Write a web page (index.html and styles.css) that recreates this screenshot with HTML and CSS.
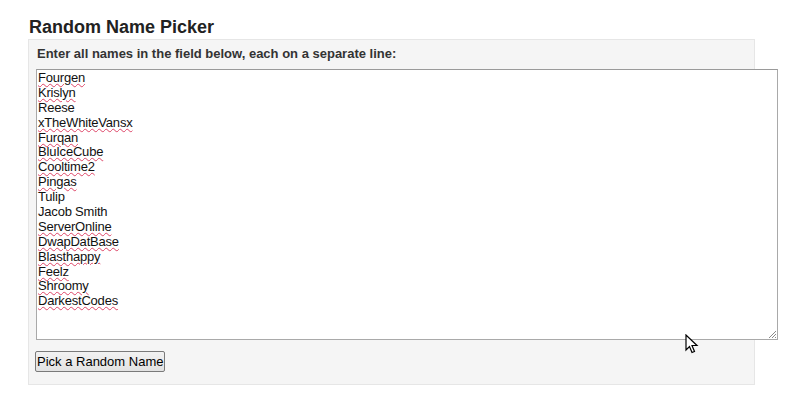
FILE: index.html
```html
<!DOCTYPE html>
<html>
<head>
<meta charset="utf-8">
<link rel="stylesheet" href="styles.css">
</head>
<body>
<div class="page">
  <h1 class="title">Random Name Picker</h1>
  <div class="panel">
    <label class="label">Enter all names in the field below, each on a separate line:</label>
    <div class="field-wrap">
      <div class="names" role="textbox" aria-multiline="true">
        <div class="line sp">Fourgen</div>
        <div class="line sp">Krislyn</div>
        <div class="line">Reese</div>
        <div class="line sp">xTheWhiteVansx</div>
        <div class="line sp">Furqan</div>
        <div class="line sp">BluIceCube</div>
        <div class="line sp">Cooltime2</div>
        <div class="line sp">Pingas</div>
        <div class="line">Tulip</div>
        <div class="line">Jacob Smith</div>
        <div class="line sp">ServerOnline</div>
        <div class="line sp">DwapDatBase</div>
        <div class="line sp">Blasthappy</div>
        <div class="line sp">Feelz</div>
        <div class="line sp">Shroomy</div>
        <div class="line sp">DarkestCodes</div>
      </div>
      <svg class="grip" width="9" height="9" viewBox="0 0 9 9">
        <path d="M8 1 L1 8 M8 4 L4 8 M8 7 L7 8" stroke="#8a8a8a" stroke-width="1" fill="none"/>
      </svg>
      <svg class="cursor" width="14" height="22" viewBox="0 0 14 22">
        <path d="M1 1 L1 16 L4.5 12.5 L7 18.5 L9.5 17.5 L7 11.5 L12 11.5 Z" fill="#fff" stroke="#000" stroke-width="1.2" stroke-linejoin="miter"/>
      </svg>
    </div>
    <button class="pick" type="button">Pick a Random Name</button>
  </div>
</div>
</body>
</html>
```

FILE: styles.css
```css
html, body {
  margin: 0;
  padding: 0;
  background: #ffffff;
}

body {
  font-family: "Liberation Sans", Arial, sans-serif;
  color: #222;
}

.page {
  padding: 17px 0 0 28px;
  width: 727px;
}

.title {
  margin: 0 0 1px 1px;
  font-size: 18px;
  line-height: 21px;
  font-weight: bold;
  color: #222;
}

.panel {
  background: #f5f5f5;
  border: 1px solid #e6e6e6;
  padding: 6px 0 12px 7px;
  display: flex;
  flex-direction: column;
  align-items: flex-start;
  height: 326px;
  box-sizing: content-box;
}

.label {
  display: block;
  margin: 0 0 7px 1px;
  font-size: 13px;
  line-height: 16px;
  font-weight: bold;
  color: #333;
}

.field-wrap {
  position: relative;
  width: 742px;
  height: 271px;
  flex: none;
}

.names {
  box-sizing: border-box;
  width: 742px;
  height: 271px;
  background: #fff;
  border: 1px solid #a9a9a9;
  border-top-color: #9a9a9a;
  padding: 1px 0 0 1px;
  font-size: 13px;
  line-height: 14.9px;
  letter-spacing: -0.2px;
  color: #111;
  overflow: hidden;
}

.line {
  white-space: pre;
  height: 14.9px;
}

.line.sp {
  display: block;
  width: max-content;
  text-decoration: underline wavy #dd4466;
  text-decoration-thickness: 1px;
  text-underline-offset: 1px;
}

.grip {
  position: absolute;
  right: 1px;
  bottom: 1px;
}

.cursor {
  position: absolute;
  left: 649px;
  top: 265px;
}

.pick {
  margin-top: 11px;
  margin-left: -1px;
  height: 21px;
  padding: 0 1px;
  font-family: "Liberation Sans", Arial, sans-serif;
  font-size: 13px;
  color: #000;
  background: linear-gradient(#f2f2f2, #e2e2e2);
  border: 1px solid #7a7a7a;
  border-radius: 2px;
}
```
